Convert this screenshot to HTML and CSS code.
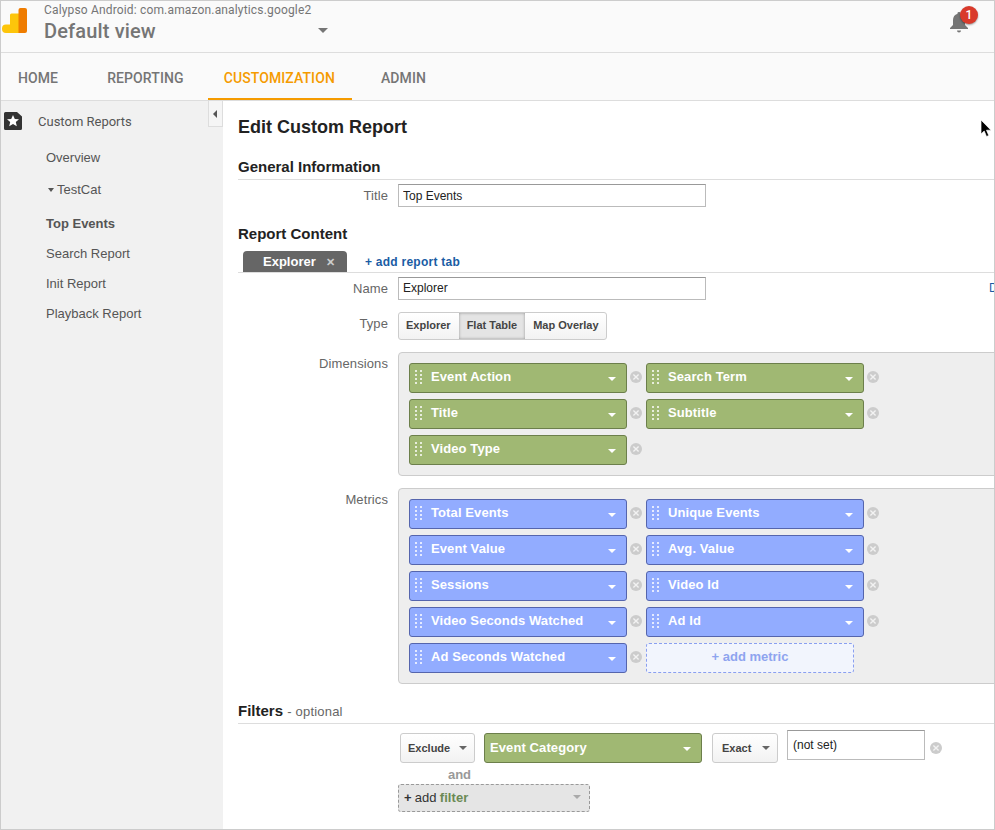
FILE: index.html
```html
<!DOCTYPE html>
<html lang="en">
<head>
    <meta charset="UTF-8">
    <meta name="viewport" content="width=device-width, initial-scale=1.0">
    <title>Edit Custom Report</title>
    <link rel="stylesheet" href="styles.css">
</head>
<body>
    <svg class="defs" width="0" height="0">
        <symbol id="remove" viewBox="0 0 12 12">
            <circle cx="6" cy="6" r="6" fill="#ccc"/>
            <path d="M3.4 3.4l5.200 5.200M8.600 3.400l-5.200 5.200" stroke="#f2f2f2" stroke-width="1.4"/>
        </symbol>
        <symbol id="dots" viewBox="0 0 7 14">
            <path d="M0 0h2v2H0zM5 0h2v2H5zM0 4h2v2H0zM5 4h2v2H5zM0 8h2v2H0zM5 8h2v2H5zM0 12h2v2H0zM5 12h2v2H5z" fill="#fff" opacity=".75"/>
        </symbol>
    </svg>

    <div class="app">
        <header class="topbar">
            <svg class="logo" width="25" height="25" viewBox="0 0 25 25">
                <path d="M8 25V7a1.500 1.500 0 0 1 1.500-1.500H17V25z" fill="#fdc50b"/>
                <path d="M16.500 2a2 2 0 0 1 2-2H23a2 2 0 0 1 2 2v21a2 2 0 0 1-2 2h-6.500z" fill="#ef7c00"/>
                <path d="M4 16.500h4.500V25H4a4 4 0 0 1-4-4v-.500a4 4 0 0 1 4-4z" fill="#fdc50b"/>
            </svg>
            <div class="account">
                <div class="account-name">Calypso Android: com.amazon.analytics.google2</div>
                <div class="view-name">Default view</div>
            </div>
            <span class="view-caret"></span>
            <div class="bell">
                <svg width="18" height="21" viewBox="0 0 18 21">
                    <path d="M9 0a1.500 1.500 0 0 1 1.500 1.700C13.500 2.500 15 5 15 8v5l3 3v1H0v-1l3-3V8c0-3 1.500-5.500 4.500-6.300A1.500 1.500 0 0 1 9 0zM7 18.500h4a2 2 0 0 1-4 0z" fill="#757575"/>
                </svg>
                <span class="badge">1</span>
            </div>
        </header>

        <nav class="tabs">
            <a class="tab">HOME</a>
            <a class="tab">REPORTING</a>
            <a class="tab active">CUSTOMIZATION</a>
            <a class="tab">ADMIN</a>
        </nav>

        <div class="body">
            <aside class="sidebar">
                <div class="side-title">
                    <svg class="star" width="18" height="18" viewBox="0 0 18 18">
                        <path d="M1.500 0H13l5 4.500V16.500a1.500 1.500 0 0 1-1.500 1.500h-15A1.500 1.500 0 0 1 0 16.500v-15A1.500 1.500 0 0 1 1.500 0z" fill="#333"/>
                        <path d="M9 3l1.800 3.900 4.200.4-3.200 2.800 1 4.200L9 12.100l-3.800 2.200 1-4.200L3 7.300l4.200-.4z" fill="#fff"/>
                    </svg>
                    Custom Reports
                </div>
                <a class="side-link overview">Overview</a>
                <a class="side-link category"><span class="side-caret"></span>TestCat</a>
                <a class="side-link current">Top Events</a>
                <a class="side-link">Search Report</a>
                <a class="side-link">Init Report</a>
                <a class="side-link">Playback Report</a>
                <button class="collapse"><span></span></button>
            </aside>

            <main class="content">
                <h1>Edit Custom Report</h1>

                <h2 class="section first">General Information</h2>
                <div class="row title-row">
                    <label>Title</label>
                    <input class="text-input" type="text" value="Top Events">
                </div>

                <h2 class="section-plain">Report Content</h2>
                <div class="report-tabs">
                    <div class="report-tab">Explorer <span class="tab-close">&#10005;</span></div>
                    <a class="add-tab">+ add report tab</a>
                </div>
                <div class="row name-row">
                    <label>Name</label>
                    <input class="text-input" type="text" value="Explorer">
                    <a class="delete-tab">Delete tab</a>
                </div>
                <div class="row type-row">
                    <label>Type</label>
                    <div class="segments">
                        <span class="segment first">Explorer</span>
                        <span class="segment pressed">Flat Table</span>
                        <span class="segment last">Map Overlay</span>
                    </div>
                </div>

                <div class="row panel-row">
                    <label>Dimensions</label>
                    <div class="panel">
                        <div class="slot"><div class="chip green"><svg class="dots"><use href="#dots"/></svg>Event Action<span class="caret"></span></div><svg class="remove"><use href="#remove"/></svg></div>
                        <div class="slot"><div class="chip green"><svg class="dots"><use href="#dots"/></svg>Search Term<span class="caret"></span></div><svg class="remove"><use href="#remove"/></svg></div>
                        <div class="slot"><div class="chip green"><svg class="dots"><use href="#dots"/></svg>Title<span class="caret"></span></div><svg class="remove"><use href="#remove"/></svg></div>
                        <div class="slot"><div class="chip green"><svg class="dots"><use href="#dots"/></svg>Subtitle<span class="caret"></span></div><svg class="remove"><use href="#remove"/></svg></div>
                        <div class="slot"><div class="chip green"><svg class="dots"><use href="#dots"/></svg>Video Type<span class="caret"></span></div><svg class="remove"><use href="#remove"/></svg></div>
                    </div>
                </div>

                <div class="row panel-row">
                    <label>Metrics</label>
                    <div class="panel">
                        <div class="slot"><div class="chip blue"><svg class="dots"><use href="#dots"/></svg>Total Events<span class="caret"></span></div><svg class="remove"><use href="#remove"/></svg></div>
                        <div class="slot"><div class="chip blue"><svg class="dots"><use href="#dots"/></svg>Unique Events<span class="caret"></span></div><svg class="remove"><use href="#remove"/></svg></div>
                        <div class="slot"><div class="chip blue"><svg class="dots"><use href="#dots"/></svg>Event Value<span class="caret"></span></div><svg class="remove"><use href="#remove"/></svg></div>
                        <div class="slot"><div class="chip blue"><svg class="dots"><use href="#dots"/></svg>Avg. Value<span class="caret"></span></div><svg class="remove"><use href="#remove"/></svg></div>
                        <div class="slot"><div class="chip blue"><svg class="dots"><use href="#dots"/></svg>Sessions<span class="caret"></span></div><svg class="remove"><use href="#remove"/></svg></div>
                        <div class="slot"><div class="chip blue"><svg class="dots"><use href="#dots"/></svg>Video Id<span class="caret"></span></div><svg class="remove"><use href="#remove"/></svg></div>
                        <div class="slot"><div class="chip blue"><svg class="dots"><use href="#dots"/></svg>Video Seconds Watched<span class="caret"></span></div><svg class="remove"><use href="#remove"/></svg></div>
                        <div class="slot"><div class="chip blue"><svg class="dots"><use href="#dots"/></svg>Ad Id<span class="caret"></span></div><svg class="remove"><use href="#remove"/></svg></div>
                        <div class="slot"><div class="chip blue"><svg class="dots"><use href="#dots"/></svg>Ad Seconds Watched<span class="caret"></span></div><svg class="remove"><use href="#remove"/></svg></div>
                        <div class="slot"><div class="add-metric">+ add metric</div></div>
                    </div>
                </div>

                <h2 class="section filters">Filters <small>- optional</small></h2>
                <div class="filter-row">
                    <div class="select exclude">Exclude<span class="caret dark"></span></div>
                    <div class="chip green event-category">Event Category<span class="caret"></span></div>
                    <div class="select exact">Exact<span class="caret dark"></span></div>
                    <input class="text-input not-set" type="text" value="(not set)">
                    <svg class="remove"><use href="#remove"/></svg>
                </div>
                <div class="and">and</div>
                <div class="add-filter"><b>+</b> add <b class="filter-word">filter</b><span class="caret grey"></span></div>
            </main>
        </div>

        <svg class="cursor" width="12" height="18" viewBox="0 0 12 18">
            <path d="M1 0v14l3.200-3 2.300 5.500 2.300-1-2.300-5.300H11z" fill="#000" stroke="#fff" stroke-width=".7"/>
        </svg>
    </div>
</body>
</html>
```

FILE: styles.css
```css
* {
    box-sizing: border-box;
}

body {
    margin: 0;
    font-family: "Liberation Sans", Arial, sans-serif;
    background-color: #fff;
}

.defs {
    position: absolute;
}

.app {
    position: relative;
    width: 995px;
    height: 830px;
    display: flex;
    flex-direction: column;
    border: 1px solid #ccc;
    overflow: hidden;
}

/* top bar */
.topbar {
    display: flex;
    height: 52px;
    flex-shrink: 0;
    background: #fafafa;
    border-bottom: 1px solid #ddd;
    font-family: Roboto, sans-serif;
    color: #757575;
}

.logo {
    margin: 7px 0 0 1px;
}

.account {
    margin-left: 17px;
}

.account-name {
    margin-top: 1px;
    font-size: 12px;
    line-height: 16px;
    letter-spacing: 0.16px;
}

.view-name {
    margin-top: 1px;
    font-size: 20px;
    line-height: 24px;
    font-weight: 500;
    letter-spacing: 0.15px;
}

.view-caret {
    width: 0;
    height: 0;
    margin: 27px 0 0 auto;
    border-left: 5px solid transparent;
    border-right: 5px solid transparent;
    border-top: 5px solid #757575;
    position: absolute;
    left: 317px;
}

.bell {
    position: relative;
    margin: 11px 0 0 auto;
    padding-right: 26px;
}

.badge {
    position: absolute;
    left: 10px;
    top: -6px;
    width: 18px;
    height: 18px;
    border-radius: 50%;
    background: #d93a2b;
    box-shadow: 0 1px 2px rgba(0, 0, 0, 0.4);
    color: #fff;
    font-size: 12px;
    font-weight: 500;
    line-height: 18px;
    text-align: center;
}

/* main tabs */
.tabs {
    display: flex;
    height: 48px;
    flex-shrink: 0;
    background: #fafafa;
    border-bottom: 1px solid #ddd;
    font-family: Roboto, sans-serif;
    font-size: 14px;
    font-weight: 500;
    letter-spacing: 0.1px;
    color: #757575;
}

.tab {
    padding: 0 24px;
    line-height: 51px;
}

.tab:first-child {
    padding: 0 25px 0 17px;
}

.tab.active {
    padding: 0 17px 0 16px;
    margin-right: 5px;
    height: 47px;
    color: #f59b00;
    border-bottom: 2px solid #f59b00;
}

/* sidebar */
.body {
    display: flex;
    flex: 1;
    min-height: 0;
}

.sidebar {
    position: relative;
    width: 222px;
    flex-shrink: 0;
    background: #f1f1f1;
    font-size: 13px;
    color: #555;
}

.side-title {
    display: flex;
    align-items: center;
    height: 40px;
    padding-left: 3px;
    font-family: Roboto, sans-serif;
}

.star {
    margin-right: 16px;
}

.side-link {
    display: block;
    height: 30px;
    line-height: 30px;
    padding-left: 45px;
}

.overview {
    margin-top: 2px;
}

.category {
    margin-top: 2px;
    height: 32px;
}

.current {
    margin-top: 2px;
    font-weight: bold;
}

.side-caret {
    display: inline-block;
    width: 0;
    height: 0;
    margin: 0 3px 0 2px;
    vertical-align: 2px;
    border-left: 3.500px solid transparent;
    border-right: 3.500px solid transparent;
    border-top: 4px solid #555;
}

.collapse {
    position: absolute;
    left: 207px;
    top: 0;
    width: 15px;
    height: 26px;
    padding: 0;
    background: #f5f5f5;
    border: 1px solid #ddd;
    border-top: none;
}

.collapse span {
    display: block;
    width: 0;
    height: 0;
    margin-left: 4px;
    border-top: 4px solid transparent;
    border-bottom: 4px solid transparent;
    border-right: 4px solid #555;
}

/* report form */
.content {
    flex: 1;
    min-width: 0;
    padding-left: 15px;
    overflow: hidden;
    font-size: 12px;
    color: #666;
}

h1 {
    margin: 15px 0 0;
    font-size: 18px;
    line-height: 22px;
    color: #222;
}

.section {
    margin: 20px 0 0;
    padding-bottom: 3px;
    font-size: 15px;
    line-height: 18px;
    color: #222;
    border-bottom: 1px solid #ddd;
}

.section-plain {
    margin: 18px 0 0;
    font-size: 15px;
    line-height: 18px;
    color: #222;
}

.section small {
    font-size: 13px;
    line-height: 1;
    font-weight: normal;
    letter-spacing: 0.2px;
    color: #666;
}

.row {
    display: flex;
    white-space: nowrap;
}

.row label {
    width: 150px;
    margin-right: 10px;
    flex-shrink: 0;
    text-align: right;
    font-size: 13px;
    letter-spacing: 0.1px;
    color: #666;
}

.title-row,
.name-row {
    margin-top: 4px;
}

.title-row label,
.name-row label {
    line-height: 23px;
}

.text-input {
    width: 308px;
    height: 23px;
    flex-shrink: 0;
    padding: 0 4px;
    border: 1px solid #bbb;
    border-top-color: #999;
    border-radius: 0;
    outline: none;
    font-family: "Liberation Sans", Arial, sans-serif;
    font-size: 12px;
    color: #222;
}

.name-row .text-input {
    padding-bottom: 1px;
}

.report-tabs {
    display: flex;
    align-items: center;
    height: 22px;
    margin-top: 8px;
    padding-left: 5px;
    border-bottom: 1px solid #ddd;
}

.report-tab {
    width: 104px;
    height: 21px;
    padding-left: 20px;
    background: #666;
    border-radius: 4px 4px 0 0;
    color: #fff;
    font-size: 13px;
    font-weight: bold;
    line-height: 21px;
}

.tab-close {
    margin-left: 7px;
    font-size: 11px;
    color: #ccc;
}

.add-tab {
    margin-left: 18px;
    font-size: 12px;
    font-weight: bold;
    letter-spacing: 0.25px;
    color: #1a5ca4;
}

.delete-tab {
    margin-left: 283px;
    color: #1a5ca4;
    line-height: 23px;
}

.type-row {
    margin-top: 12px;
}

.type-row label {
    line-height: 24px;
}

.segments {
    display: flex;
    height: 28px;
    border: 1px solid #ccc;
    border-radius: 3px;
    background: linear-gradient(#fff, #f2f2f2);
    font-size: 11px;
    font-weight: bold;
    line-height: 25px;
    color: #444;
}

.segment.first {
    padding: 0 8px 0 7px;
}

.segment.pressed {
    padding: 0 8px;
    background: #e4e4e4;
    box-shadow: inset 0 0 3px rgba(0, 0, 0, 0.35);
}

.segment.last {
    padding: 0 7px 0 8px;
}

.panel-row {
    margin-top: 12px;
}

.panel-row label {
    padding-top: 4px;
    line-height: 16px;
}

.panel {
    display: grid;
    grid-template-columns: 237px 237px;
    row-gap: 6px;
    width: 620px;
    flex-shrink: 0;
    padding: 10px;
    background: #eee;
    border: 1px solid #ccc;
    border-radius: 4px;
}

.slot {
    display: flex;
    align-items: center;
    height: 30px;
}

.chip {
    display: flex;
    align-items: center;
    width: 218px;
    height: 30px;
    flex-shrink: 0;
    padding-right: 10px;
    padding-bottom: 4px;
    border: 1px solid;
    border-radius: 3px;
    color: #fff;
    font-size: 13px;
    font-weight: bold;
    letter-spacing: 0.1px;
}

.chip.green {
    background: #a0b873;
    border-color: #6c7f4b;
}

.chip.blue {
    background: #92acff;
    border-color: #5565ad;
}

.dots {
    width: 7px;
    height: 14px;
    margin: 2px 9px 0 5px;
}

.caret {
    width: 0;
    height: 0;
    margin: 5px 0 0 auto;
    border-left: 4px solid transparent;
    border-right: 4px solid transparent;
    border-top: 4px solid #fff;
}

.caret.dark {
    border-top-color: #666;
    margin-top: 0;
}

.caret.grey {
    border-top-color: #aaa;
    margin-top: 0;
}

.remove {
    width: 12px;
    height: 12px;
    margin: 0 0 2px 3px;
    flex-shrink: 0;
}

.add-metric {
    width: 208px;
    height: 30px;
    background: #f2f5fd;
    border: 1px dashed #8a9ff0;
    border-radius: 3px;
    color: #8ea4ef;
    font-size: 13px;
    font-weight: bold;
    line-height: 26px;
    text-align: center;
}

.filters {
    margin-top: 18px;
}

.filter-row {
    display: flex;
    align-items: flex-start;
    margin: 6px 0 0 162px;
    white-space: nowrap;
}

.select {
    display: flex;
    align-items: center;
    height: 30px;
    margin-top: 3px;
    padding: 0 7px;
    background: linear-gradient(#fff, #f2f2f2);
    border: 1px solid #ccc;
    border-radius: 3px;
    color: #444;
    font-size: 11px;
    font-weight: bold;
}

.exclude {
    width: 75px;
    margin-right: 9px;
}

.exact {
    width: 66px;
    margin: 3px 9px 0 10px;
    padding-left: 9px;
}

.event-category {
    margin-top: 3px;
    padding-left: 5px;
    padding-bottom: 2px;
}

.event-category .caret {
    margin-top: 3px;
}

.not-set {
    width: 138px;
    height: 30px;
    padding: 0 5px;
}

.filter-row .remove {
    margin: 12px 0 0 5px;
}

.and {
    width: 123px;
    margin: 5px 0 0 160px;
    font-size: 13px;
    font-weight: bold;
    line-height: 14px;
    text-align: center;
    color: #999;
}

.add-filter {
    display: flex;
    align-items: center;
    gap: 3px;
    width: 192px;
    height: 28px;
    margin: 2px 0 0 160px;
    padding: 0 8px 2px 5px;
    background: #e5e5e5;
    border: 1px dashed #999;
    border-radius: 3px;
    color: #333;
    font-size: 13px;
    letter-spacing: 0.1px;
}

.filter-word {
    color: #6b8a54;
}

.cursor {
    position: absolute;
    left: 979px;
    top: 119px;
}
```
